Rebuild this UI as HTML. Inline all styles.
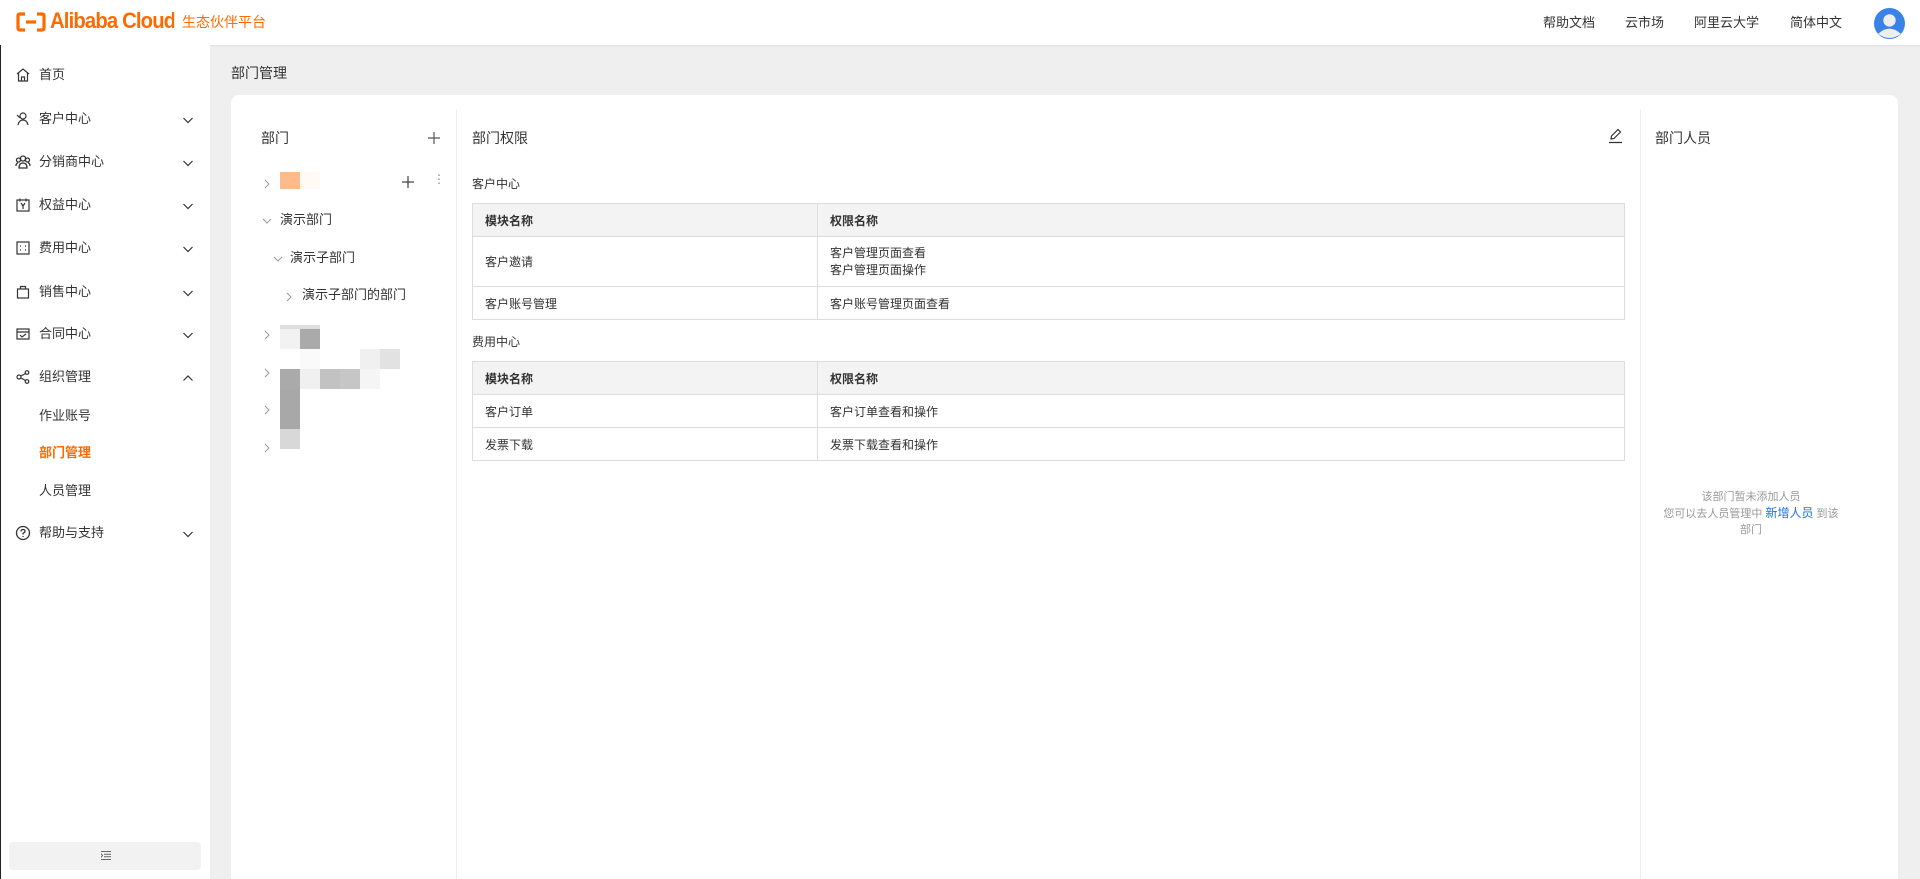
<!DOCTYPE html>
<html><head><meta charset="utf-8"><style>
*{margin:0;padding:0;box-sizing:border-box}
html,body{width:1920px;height:879px;overflow:hidden}
body{background:#efefef;font-family:"Liberation Sans","Noto Sans CJK SC",sans-serif;color:#333;position:relative}
.a{position:absolute}
.hdr{left:0;top:0;width:1920px;height:45px;background:#fff;box-shadow:0 1px 3px rgba(0,0,0,.06)}
.side{left:0;top:45px;width:210px;height:834px;background:#fff;border-left:1px solid #222}
.it{position:absolute;left:38px;font-size:13px;color:#333;line-height:16px}
.ic{position:absolute;left:14px;width:16px;height:16px}
.chev{position:absolute;left:181px;width:12px;height:12px}
.t{font-size:12px;color:#333;line-height:14px}
table{border-collapse:collapse;position:absolute;left:472px;width:1153px;font-size:12px;color:#333}
td,th{border:1px solid #ddd;padding:0 12px;text-align:left;vertical-align:middle}
th{background:#f3f3f3;font-weight:bold;height:33px}
.sq{position:absolute;width:20px;height:20px}
.arr{position:absolute;font-size:11px;color:#999}
</style></head><body>
<div class="a hdr">
 <svg class="a" style="left:16px;top:12px" width="30" height="20" viewBox="0 0 30 20"><path d="M9 2H4Q2 2 2 4V16Q2 18 4 18H9M21 2H26Q28 2 28 4V16Q28 18 26 18H21M10 10H20" fill="none" stroke="#ff6a00" stroke-width="3.2"/></svg>
 <div class="a" style="left:50px;top:8px;font-size:22px;color:#ff6a00;letter-spacing:-0.9px;line-height:26px;font-weight:bold;transform:scaleX(0.92);transform-origin:left">Alibaba Cloud</div>
 <div class="a" style="left:174px;top:12px;width:1px;height:20px;background:#eee"></div>
 <div class="a" style="left:182px;top:13px;font-size:14px;color:#ff6a00;line-height:18px">生态伙伴平台</div>
 <div class="a t" style="left:1543px;top:16px;font-size:13px">帮助文档</div>
 <div class="a t" style="left:1625px;top:16px;font-size:13px">云市场</div>
 <div class="a t" style="left:1694px;top:16px;font-size:13px">阿里云大学</div>
 <div class="a t" style="left:1790px;top:16px;font-size:13px">简体中文</div>
 <svg class="a" style="left:1874px;top:8px" width="31" height="31" viewBox="0 0 30 30"><circle cx="15" cy="15" r="15" fill="#3b82e8"/><circle cx="15" cy="12" r="6" fill="#eee"/><path d="M4 25Q15 15 26 25Q15 33 4 25Z" fill="#eee"/></svg>
</div>
<div class="a side">
 <svg class="ic" style="top:22px" viewBox="0 0 16 16" fill="none" stroke="#333" stroke-width="1.2"><path d="M2 7L8 2L14 7M3.5 6V14H12.5V6M6.5 14V10H9.5V14"/></svg><div class="it" style="top:22px">首页</div>
 <svg class="ic" style="top:66px" viewBox="0 0 16 16" fill="none" stroke="#333" stroke-width="1.2"><circle cx="8" cy="5" r="3"/><path d="M3 14Q4 9 8 9Q12 9 13 14M2 4L5 7"/></svg><div class="it" style="top:66px">客户中心</div>
 <svg class="ic" style="top:109px" viewBox="0 0 16 16" fill="none" stroke="#333" stroke-width="1.3"><circle cx="8" cy="4.5" r="2.5"/><circle cx="3.5" cy="6" r="2"/><circle cx="12.5" cy="6" r="2"/><path d="M4 14Q4 9 8 9Q12 9 12 14ZM1 12Q1 9 3 9M15 12Q15 9 13 9"/></svg><div class="it" style="top:109px">分销商中心</div>
 <svg class="ic" style="top:152px" viewBox="0 0 16 16" fill="none" stroke="#333" stroke-width="1.2"><rect x="2" y="3" width="12" height="11"/><path d="M5 1.5V4.5M11 1.5V4.5M6 6L8 9L10 6M8 9V12"/></svg><div class="it" style="top:152px">权益中心</div>
 <svg class="ic" style="top:195px" viewBox="0 0 16 16" fill="none" stroke="#333" stroke-width="1.2"><rect x="2" y="2" width="12" height="12"/><path d="M5 6H6M10 6H11M5 10H6M10 10H11"/></svg><div class="it" style="top:195px">费用中心</div>
 <svg class="ic" style="top:239px" viewBox="0 0 16 16" fill="none" stroke="#333" stroke-width="1.2"><rect x="2.5" y="5" width="11" height="9"/><path d="M5.5 5V2.5H10.5V5"/></svg><div class="it" style="top:239px">销售中心</div>
 <svg class="ic" style="top:281px" viewBox="0 0 16 16" fill="none" stroke="#333" stroke-width="1.2"><rect x="2" y="3" width="12" height="10"/><path d="M2 6H14M5 9L7 11L11 8"/></svg><div class="it" style="top:281px">合同中心</div>
 <svg class="ic" style="top:324px" viewBox="0 0 16 16" fill="none" stroke="#333" stroke-width="1.2"><circle cx="4" cy="8" r="2"/><circle cx="12" cy="3.5" r="1.8"/><circle cx="12" cy="12.5" r="1.8"/><path d="M6 7L10.5 4.5M6 9L10.5 11.5"/></svg><div class="it" style="top:324px">组织管理</div>
 <div class="it" style="top:363px">作业账号</div>
 <div class="it" style="top:400px;color:#ff6a00;font-weight:bold">部门管理</div>
 <div class="it" style="top:438px">人员管理</div>
 <svg class="ic" style="top:480px" viewBox="0 0 16 16" fill="none" stroke="#333" stroke-width="1.3"><circle cx="8" cy="8" r="6.5"/><path d="M6 6.5Q6 4.5 8 4.5Q10 4.5 10 6.3Q10 7.5 8 8.3V9.5M8 11V12"/></svg><div class="it" style="top:480px">帮助与支持</div>
 <svg class="chev" style="top:69px" viewBox="0 0 12 12" fill="none" stroke="#333" stroke-width="1.2"><path d="M1.5 4L6 8.5L10.5 4"/></svg>
 <svg class="chev" style="top:112px" viewBox="0 0 12 12" fill="none" stroke="#333" stroke-width="1.2"><path d="M1.5 4L6 8.5L10.5 4"/></svg>
 <svg class="chev" style="top:155px" viewBox="0 0 12 12" fill="none" stroke="#333" stroke-width="1.2"><path d="M1.5 4L6 8.5L10.5 4"/></svg>
 <svg class="chev" style="top:198px" viewBox="0 0 12 12" fill="none" stroke="#333" stroke-width="1.2"><path d="M1.5 4L6 8.5L10.5 4"/></svg>
 <svg class="chev" style="top:242px" viewBox="0 0 12 12" fill="none" stroke="#333" stroke-width="1.2"><path d="M1.5 4L6 8.5L10.5 4"/></svg>
 <svg class="chev" style="top:284px" viewBox="0 0 12 12" fill="none" stroke="#333" stroke-width="1.2"><path d="M1.5 4L6 8.5L10.5 4"/></svg>
 <svg class="chev" style="top:327px" viewBox="0 0 12 12" fill="none" stroke="#333" stroke-width="1.2"><path d="M1.5 8.5L6 4L10.5 8.5"/></svg>
 <svg class="chev" style="top:483px" viewBox="0 0 12 12" fill="none" stroke="#333" stroke-width="1.2"><path d="M1.5 4L6 8.5L10.5 4"/></svg>
 <div class="a" style="left:8px;top:797px;width:192px;height:28px;background:#f2f2f2;border-radius:4px"></div>
 <svg class="a" style="left:100px;top:806px" width="10" height="9" viewBox="0 0 10 9" fill="none" stroke="#666" stroke-width="1"><path d="M0 .5H10M3 3.2H10M3 5.8H10M0 8.5H10M0 2.5L1.5 4.5L0 6.5"/></svg>
</div>
<div class="a" style="left:231px;top:63px;font-size:14px;color:#333">部门管理</div>
<div class="a" style="left:231px;top:95px;width:1667px;height:784px;background:#fff;border-radius:8px 8px 0 0"></div>
<div class="a" style="left:456px;top:110px;width:1px;height:769px;background:#eee"></div>
<div class="a" style="left:1640px;top:110px;width:1px;height:769px;background:#eee"></div>
<div class="a" style="left:261px;top:128px;font-size:14px">部门</div>
<svg class="a" style="left:427px;top:131px" width="14" height="14" viewBox="0 0 14 14" stroke="#555" stroke-width="1.2"><path d="M7 1V13M1 7H13"/></svg>
<svg class="a" style="left:264px;top:179px" width="6" height="10" viewBox="0 0 6 10" fill="none" stroke="#999"><path d="M1 1L5 5L1 9"/></svg>
<div class="sq" style="left:280px;top:172px;height:17px;background:#fdba8b"></div>
<div class="sq" style="left:300px;top:172px;height:17px;background:#fffaf6"></div>
<svg class="a" style="left:402px;top:176px" width="12" height="12" viewBox="0 0 12 12" stroke="#444" stroke-width="1.2"><path d="M6 0V12M0 6H12"/></svg>
<div class="a" style="left:433px;top:172px;font-size:12px;color:#888">⋮</div>
<svg class="a" style="left:262px;top:218px" width="10" height="6" viewBox="0 0 10 6" fill="none" stroke="#999"><path d="M1 1L5 5L9 1"/></svg>
<div class="a t" style="left:280px;top:213px;font-size:13px">演示部门</div>
<svg class="a" style="left:273px;top:256px" width="10" height="6" viewBox="0 0 10 6" fill="none" stroke="#999"><path d="M1 1L5 5L9 1"/></svg>
<div class="a t" style="left:290px;top:251px;font-size:13px">演示子部门</div>
<svg class="a" style="left:286px;top:292px" width="6" height="10" viewBox="0 0 6 10" fill="none" stroke="#999"><path d="M1 1L5 5L1 9"/></svg>
<div class="a t" style="left:302px;top:288px;font-size:13px">演示子部门的部门</div>
<svg class="a" style="left:264px;top:330px" width="6" height="10" viewBox="0 0 6 10" fill="none" stroke="#999"><path d="M1 1L5 5L1 9"/></svg>
<svg class="a" style="left:264px;top:368px" width="6" height="10" viewBox="0 0 6 10" fill="none" stroke="#999"><path d="M1 1L5 5L1 9"/></svg>
<svg class="a" style="left:264px;top:405px" width="6" height="10" viewBox="0 0 6 10" fill="none" stroke="#999"><path d="M1 1L5 5L1 9"/></svg>
<svg class="a" style="left:264px;top:443px" width="6" height="10" viewBox="0 0 6 10" fill="none" stroke="#999"><path d="M1 1L5 5L1 9"/></svg>
<div class="sq" style="left:280px;top:325px;height:4px;background:#ddd"></div>
<div class="sq" style="left:300px;top:325px;height:4px;background:#ddd"></div>
<div class="sq" style="left:280px;top:329px;background:#f2f2f2"></div>
<div class="sq" style="left:300px;top:329px;background:#aaa"></div>
<div class="sq" style="left:300px;top:349px;background:#fafafa"></div>
<div class="sq" style="left:360px;top:349px;background:#f0f0f0"></div>
<div class="sq" style="left:380px;top:349px;background:#e2e2e2"></div>
<div class="sq" style="left:280px;top:369px;background:#aaa"></div>
<div class="sq" style="left:300px;top:369px;background:#f0f0f0"></div>
<div class="sq" style="left:320px;top:369px;background:#c2c2c2"></div>
<div class="sq" style="left:340px;top:369px;background:#c6c6c6"></div>
<div class="sq" style="left:360px;top:369px;background:#f5f5f5"></div>
<div class="sq" style="left:280px;top:389px;height:40px;background:#a8a8a8"></div>
<div class="sq" style="left:280px;top:429px;background:#d8d8d8"></div>
<div class="a" style="left:472px;top:128px;font-size:14px">部门权限</div>
<svg class="a" style="left:1607px;top:127px" width="17" height="17" viewBox="0 0 17 17" fill="none" stroke="#333" stroke-width="1.2"><path d="M4 12L4.5 9L11 2.5L13.5 5L7 11.5ZM2 15.5H15"/></svg>
<div class="a t" style="left:472px;top:177px">客户中心</div>
<table style="top:203px">
<tr><th style="width:345px">模块名称</th><th>权限名称</th></tr>
<tr style="height:50px"><td>客户邀请</td><td style="line-height:17px">客户管理页面查看<br>客户管理页面操作</td></tr>
<tr style="height:33px"><td>客户账号管理</td><td>客户账号管理页面查看</td></tr>
</table>
<div class="a t" style="left:472px;top:335px">费用中心</div>
<table style="top:361px">
<tr><th style="width:345px">模块名称</th><th>权限名称</th></tr>
<tr style="height:33px"><td>客户订单</td><td>客户订单查看和操作</td></tr>
<tr style="height:33px"><td>发票下载</td><td>发票下载查看和操作</td></tr>
</table>
<div class="a" style="left:1655px;top:128px;font-size:14px">部门人员</div>
<div class="a" style="left:1660px;top:489px;width:182px;text-align:center;font-size:11px;color:#999;line-height:16px">该部门暂未添加人员<br>您可以去人员管理中 <span style="color:#1a73e8;font-size:12px">新增人员</span> 到该<br>部门</div>
</body></html>
